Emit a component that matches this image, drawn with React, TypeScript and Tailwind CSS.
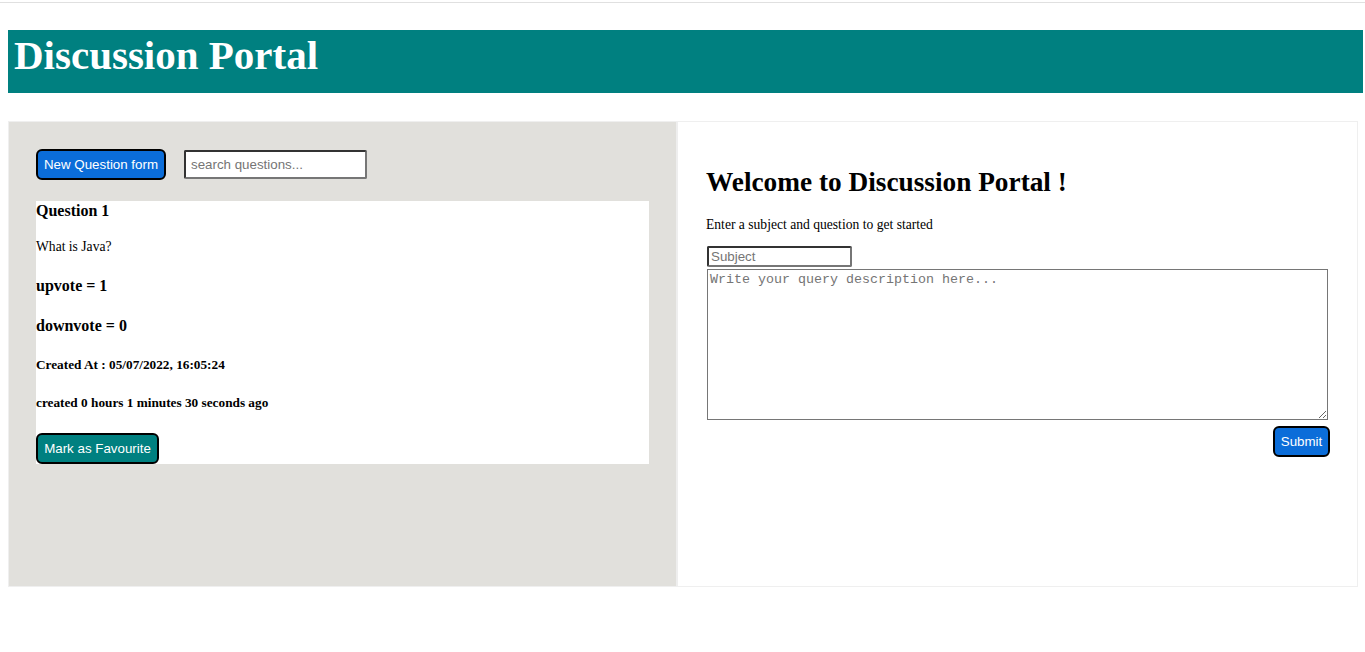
export default function App() {
  return (
    <div className="min-h-screen bg-white text-black font-['Liberation_Serif',serif]">
      {/* top rule */}
      <div className="h-[2px]" />
      <div className="h-px bg-[#e0e0e0]" />

      {/* header */}
      <header className="ml-[8px] mt-[27px] h-[63px] w-[1355px] bg-[#008080] pl-[6px] pt-[2px]">
        <h1 className="text-[41px] leading-[47px] font-bold text-white">Discussion Portal</h1>
      </header>

      {/* main */}
      <main className="ml-[8px] mt-[28px] flex h-[466px] w-[1350px] border border-[#efefef]">
        {/* left: questions */}
        <section className="w-[669px] shrink-0 border-r-2 border-[#eeeeee] bg-[#e1e0dc] pl-[27px] pt-[27px]">
          <div className="flex items-center gap-[18px]">
            <button className="h-[31px] w-[130px] rounded-[6px] border-2 border-black bg-[#0b6dd9] text-[13.33px] leading-[15px] text-white font-['Liberation_Sans',Arial,sans-serif]">
              New Question form
            </button>
            <input
              placeholder="search questions..."
              className="h-[29px] w-[183px] rounded-[2px] border-2 border-t-[#333] border-l-[#333] border-r-[#767676] border-b-[#767676] bg-white px-[5px] text-[13.33px] font-['Liberation_Sans',Arial,sans-serif] outline-none placeholder:text-[#757575]"
            />
          </div>

          <div className="mt-[21px] w-[613px] bg-white">
            <h4 className="text-[16px] leading-[20px] font-bold">Question 1</h4>
            <p className="mt-[16px] text-[13.6px] leading-[20px]">What is Java?</p>
            <h4 className="mt-[19px] text-[16px] leading-[20px] font-bold">upvote = 1</h4>
            <h4 className="mt-[20px] text-[16px] leading-[20px] font-bold">downvote = 0</h4>
            <h5 className="mt-[19px] text-[13.28px] leading-[20px] font-bold">Created At : 05/07/2022, 16:05:24</h5>
            <h5 className="mt-[18px] text-[13.28px] leading-[20px] font-bold">created 0 hours 1 minutes 30 seconds ago</h5>
            <button className="mt-[20px] block h-[31px] w-[123px] rounded-[6px] border-2 border-black bg-[#008080] text-[13.33px] leading-[15px] text-white font-['Liberation_Sans',Arial,sans-serif]">
              Mark as Favourite
            </button>
          </div>
        </section>

        {/* right: new question */}
        <section className="flex-1 bg-white pl-[28px] pt-[44px]">
          <h2 className="text-[27.3px] leading-[32px] font-bold">Welcome to Discussion Portal !</h2>
          <p className="mt-[17px] text-[13.6px] leading-[20px]">Enter a subject and question to get started</p>
          <div className="ml-[1px] mt-[11px] flex w-[623px] flex-col">
            <input
              placeholder="Subject"
              className="h-[21px] w-[145px] rounded-[2px] border-2 border-t-[#333] border-l-[#333] border-r-[#767676] border-b-[#767676] bg-white px-[2px] text-[13.33px] font-['Liberation_Sans',Arial,sans-serif] outline-none placeholder:text-[#757575]"
            />
            <textarea
              placeholder="Write your query description here..."
              className="mt-[2px] h-[151px] w-[621px] border border-[#767676] bg-white p-[2px] text-[13.33px] leading-[15px] font-['Liberation_Mono','Courier_New',monospace] outline-none placeholder:text-[#757575]"
            />
            <div className="mt-[6px] flex justify-end">
              <button className="h-[31px] w-[57px] rounded-[6px] border-2 border-black bg-[#0b6dd9] text-[13.33px] leading-[15px] text-white font-['Liberation_Sans',Arial,sans-serif]">
                Submit
              </button>
            </div>
          </div>
        </section>
      </main>
    </div>
  );
}
